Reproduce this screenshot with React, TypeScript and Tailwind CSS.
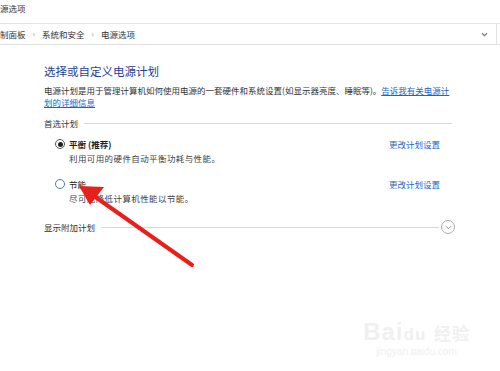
import React from "react";

const font = { fontFamily: '"Noto Sans CJK SC", "Microsoft YaHei", sans-serif' };

const Plan = ({ name, desc, checked, bold }: { name: string; desc: string; checked?: boolean; bold?: boolean }) => (
  <div className="flex items-start justify-between pl-[11px] pr-[12px]">
    <div>
      <div className="flex items-center gap-[4px] h-[14px]">
        <span
          className={
            "w-[10px] h-[10px] rounded-full border flex items-center justify-center bg-white " +
            (checked ? "border-[#555]" : "border-[#4a7ab8]")
          }
        >
          {checked && <span className="w-[5px] h-[5px] rounded-full bg-[#222]" />}
        </span>
        <span className={"text-[8.5px] text-[#222] " + (bold ? "font-bold" : "")}>{name}</span>
      </div>
      <div className="text-[8.5px] text-[#444] pl-[14px] leading-[14px] tracking-[0.4px]">{desc}</div>
    </div>
    <a className="text-[8.5px] text-[#1a66c8] h-[14px] leading-[14px]">更改计划设置</a>
  </div>
);

export default function App() {
  return (
    <div className="relative w-[500px] h-[371px] bg-white overflow-hidden" style={font}>
      <div className="h-[23px] pt-[2px] text-[8.5px] text-[#333] leading-[12px]">源选项</div>
      <div className="h-[22px] border-y border-[#e3e3e3] flex items-center text-[8.5px] text-[#333]">
        <span>制面板</span>
        <span className="mx-[7px] text-[#888] text-[8px]">›</span>
        <span>系统和安全</span>
        <span className="mx-[7px] text-[#888] text-[8px]">›</span>
        <span>电源选项</span>
        <span className="ml-auto mr-[8px] flex items-center">
          <svg width="7" height="5" viewBox="0 0 8 6"><path d="M1 1.5 L4 4.5 L7 1.5" fill="none" stroke="#777" strokeWidth="1.3" /></svg>
        </span>
        <span className="w-[1px] h-full bg-[#e3e3e3] mr-[3px]" />
      </div>
      <div className="pl-[44px] pr-[48px] pt-[18px]">
        <div className="text-[11.5px] text-[#1f3f8f] leading-[16px]">选择或自定义电源计划</div>
        <div className="text-[8.5px] text-[#333] leading-[12px] mt-[5px] whitespace-nowrap">
          电源计划是用于管理计算机如何使用电源的一套硬件和系统设置(如显示器亮度、睡眠等)。
          <span className="text-[#1a66c8] underline">告诉我有关电源计</span>
        </div>
        <div className="text-[8.5px] text-[#1a66c8] underline leading-[12px]">划的详细信息</div>
        <div className="flex items-center mt-[9px]">
          <span className="text-[8.5px] text-[#333] leading-[12px]">首选计划</span>
          <span className="flex-1 h-[1px] bg-[#d6d6d6] ml-[6px]" />
        </div>
        <div className="mt-[8px] flex flex-col gap-[12px]">
          <Plan name="平衡 (推荐)" desc="利用可用的硬件自动平衡功耗与性能。" checked bold />
          <Plan name="节能" desc="尽可能降低计算机性能以节能。" />
        </div>
        <div className="flex items-center mt-[15px] -mr-[3px]">
          <span className="text-[8.5px] text-[#333] leading-[12px]">显示附加计划</span>
          <span className="flex-1 h-[1px] bg-[#d6d6d6] ml-[6px] mr-[2px]" />
          <span className="w-[14px] h-[14px] rounded-full border border-[#aaa] flex items-center justify-center">
            <svg width="7" height="5" viewBox="0 0 8 6"><path d="M1 1.5 L4 4.5 L7 1.5" fill="none" stroke="#888" strokeWidth="1.1" /></svg>
          </span>
        </div>
      </div>
      <svg className="absolute left-0 top-0" width="500" height="371">
        <line x1="192" y1="265" x2="94" y2="196" stroke="#e8201c" strokeWidth="4" strokeLinecap="round" />
        <polygon points="79,186 104,187 90,205" fill="#e8201c" />
      </svg>
      <div className="absolute right-[30px] bottom-[14px] text-center text-[#f0f0f0] leading-none">
        <div className="text-[24px] font-bold tracking-[1px]" style={{ fontFamily: '"Liberation Sans", sans-serif' }}>
          Bai<span className="text-[17px]">du</span> <span className="text-[17px]" style={font}>经验</span>
        </div>
        <div className="text-[10px] mt-[3px]" style={{ fontFamily: '"Liberation Sans", sans-serif' }}>jingyan.baidu.com</div>
      </div>
    </div>
  );
}
